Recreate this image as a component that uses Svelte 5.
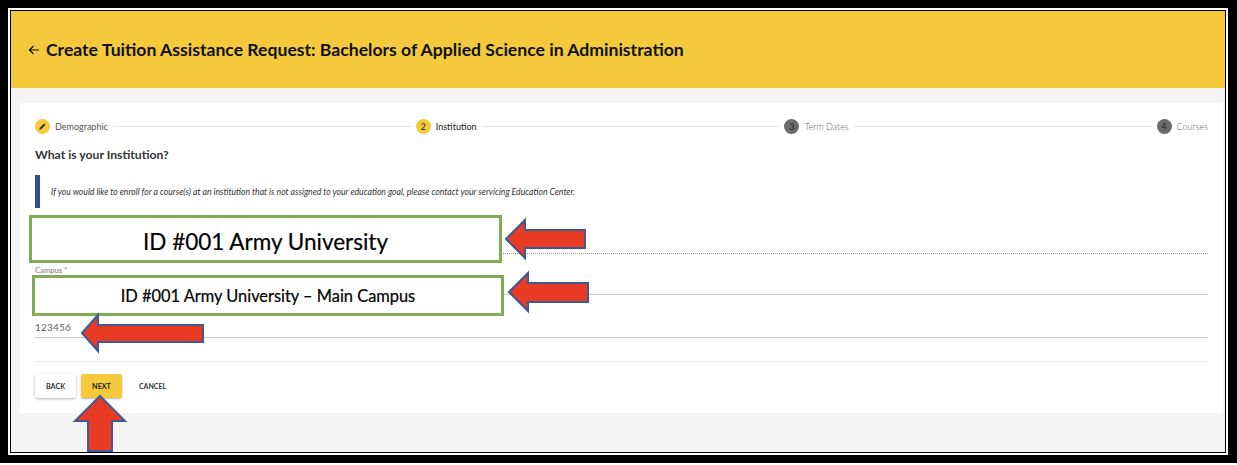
<script>
  const steps = [
    { label: "Demographic", state: "done" },
    { label: "Institution", state: "active", num: 2 },
    { label: "Term Dates", state: "todo", num: 3 },
    { label: "Courses", state: "todo", num: 4 },
  ]

  // annotation arrows drawn over the screenshot
  const arrows = [
    "506,239 525,220 525,230 585,230 585,248 525,248 525,258",
    "509,292 528,273 528,283 588,283 588,302 528,302 528,311",
    "82,333 98,315 98,325 203,325 203,342 98,342 98,351",
    "100,396 125,421 112,421 112,451 88,451 88,421 75,421",
  ]
</script>

<div class="page">
  <div class="frame-outer">
    <div class="frame-white">
      <div class="frame-inner">
        <header class="top">
          <svg class="back-arrow" viewBox="0 0 12 12" width="12" height="12">
            <path d="M11 6H1.5M5.5 2 1.5 6l4 4" fill="none" stroke="#111" stroke-width="1.2" />
          </svg>
          <h1>Create Tuition Assistance Request: Bachelors of Applied Science in Administration</h1>
        </header>

        <main class="body">
          <section class="card">
            <div class="stepper">
              {#each steps as step, i}
                {#if i > 0}<span class="line"></span>{/if}
                <div class="step">
                  <span class="dot {step.state}">
                    {#if step.state === "done"}
                      <svg viewBox="0 0 10 10" width="9" height="9">
                        <path d="M1.5 8.5 2 6.5 6.8 1.7 8.3 3.2 3.5 8Z" fill="#333" />
                      </svg>
                    {:else}
                      {step.num}
                    {/if}
                  </span>
                  <span class="step-label {step.state}">{step.label}</span>
                </div>
              {/each}
            </div>

            <h2>What is your Institution?</h2>

            <div class="info">
              <p>If you would like to enroll for a course(s) at an institution that is not assigned to your education goal, please contact your servicing Education Center.</p>
            </div>

            <div class="field first"></div>
            <div class="field second"><span class="field-label">Campus *</span></div>
            <div class="field third"><span class="value">123456</span></div>

            <hr />

            <div class="actions">
              <button class="btn plain">BACK</button>
              <button class="btn primary">NEXT</button>
              <button class="btn text">CANCEL</button>
            </div>
          </section>
        </main>
      </div>
    </div>
  </div>

  <div class="redact one">ID #001 Army University</div>
  <div class="redact two">ID #001 Army University – Main Campus</div>

  <svg class="arrows" viewBox="0 0 1237 465" width="1237" height="465">
    {#each arrows as points}
      <polygon {points} fill="#e93a24" stroke="#3d5a94" stroke-width="2" />
    {/each}
  </svg>
</div>

<style>
  :global(body) {
    margin: 0;
    background: #fff;
  }

  .page {
    position: relative;
    width: 1237px;
    height: 465px;
    overflow: hidden;
    font-family: Lato, "Open Sans", sans-serif;
  }

  .frame-outer {
    box-sizing: border-box;
    width: 1237px;
    height: 463px;
    border: solid #000;
    border-width: 8px 9px 8px 8px;
  }

  .frame-white {
    box-sizing: border-box;
    height: 100%;
    border: 2px solid #fff;
  }

  .frame-inner {
    box-sizing: border-box;
    height: 100%;
    display: flex;
    flex-direction: column;
    border: 1px solid #000;
  }

  .top {
    height: 77px;
    flex: none;
    display: flex;
    align-items: center;
    gap: 6px;
    padding-left: 17px;
    background: #f4c93b;
  }

  .back-arrow {
    flex: none;
  }

  h1 {
    margin: 0;
    font-size: 17.6px;
    font-weight: 700;
    color: #111;
  }

  .body {
    flex: 1;
    background: #f4f4f4;
    padding: 15px 2px 0 9px;
  }

  .card {
    box-sizing: border-box;
    background: #fff;
    padding: 16px 15px 15px;
  }

  .stepper {
    display: flex;
    align-items: center;
    height: 15px;
  }

  .step {
    display: flex;
    align-items: center;
    gap: 5px;
  }

  .line {
    flex: 1;
    height: 1px;
    margin: 0 5px;
    background: #e6e6e6;
  }

  .dot {
    width: 15px;
    height: 15px;
    border-radius: 50%;
    display: flex;
    align-items: center;
    justify-content: center;
    font-size: 8.5px;
    color: #222;
  }

  .dot.done,
  .dot.active {
    background: #f4c93b;
  }

  .dot.todo {
    background: #6b6b6b;
  }

  .step-label {
    font-size: 9px;
    color: #555;
  }

  .step-label.active {
    color: #222;
  }

  .step-label.todo {
    color: #666;
    font-weight: 300;
  }

  h2 {
    margin: 13px 0 0;
    font-size: 12.2px;
    line-height: 16px;
    font-weight: 700;
    color: #333;
  }

  .info {
    box-sizing: border-box;
    margin-top: 12px;
    height: 33px;
    border-left: 5px solid #34508c;
    padding-left: 11px;
    display: flex;
    align-items: center;
  }

  .info p {
    margin: 0;
    font-size: 8.65px;
    font-style: italic;
    color: #333;
  }

  .field {
    box-sizing: border-box;
    position: relative;
    border-bottom: 1px solid #c8c8c8;
  }

  .field.first {
    height: 46px;
    border-bottom: 1px dotted #999;
  }

  .field.second {
    height: 41px;
    padding-top: 12px;
  }

  .field.third {
    height: 43px;
    padding-top: 26px;
  }

  .field-label {
    display: block;
    font-size: 7.6px;
    line-height: 8px;
    font-weight: 700;
    color: #999;
  }

  .value {
    display: block;
    font-size: 10px;
    line-height: 12px;
    letter-spacing: 0.2px;
    color: #665f5f;
  }

  hr {
    margin: 23px 0 0;
    border: 0;
    height: 1px;
    background: #ececec;
  }

  .actions {
    margin-top: 12px;
    display: flex;
    gap: 5px;
  }

  .btn {
    width: 41px;
    height: 24px;
    padding: 0;
    border: 0;
    border-radius: 3px;
    font-family: inherit;
    font-size: 7.2px;
    font-weight: 700;
    color: #333;
    background: #fff;
  }

  .btn.plain {
    box-shadow: 0 1px 3px rgba(0, 0, 0, 0.3);
  }

  .btn.primary {
    background: #f4c93b;
    color: #222;
    box-shadow: 0 1px 2px rgba(0, 0, 0, 0.3);
  }

  .btn.text {
    margin-left: 5px;
    font-size: 7px;
  }

  .redact {
    position: absolute;
    box-sizing: border-box;
    display: flex;
    align-items: center;
    justify-content: center;
    background: #fff;
    border: 3px solid #7fac55;
    color: #000;
  }

  .redact.one {
    left: 29px;
    top: 215px;
    width: 473px;
    height: 48px;
    padding-top: 4px;
    font-size: 22.5px;
    -webkit-text-stroke: 0.2px #000;
  }

  .redact.two {
    left: 32px;
    top: 275px;
    width: 472px;
    height: 41px;
    font-size: 16.4px;
    -webkit-text-stroke: 0.2px #000;
  }

  .arrows {
    position: absolute;
    left: 0;
    top: 0;
    pointer-events: none;
  }
</style>
